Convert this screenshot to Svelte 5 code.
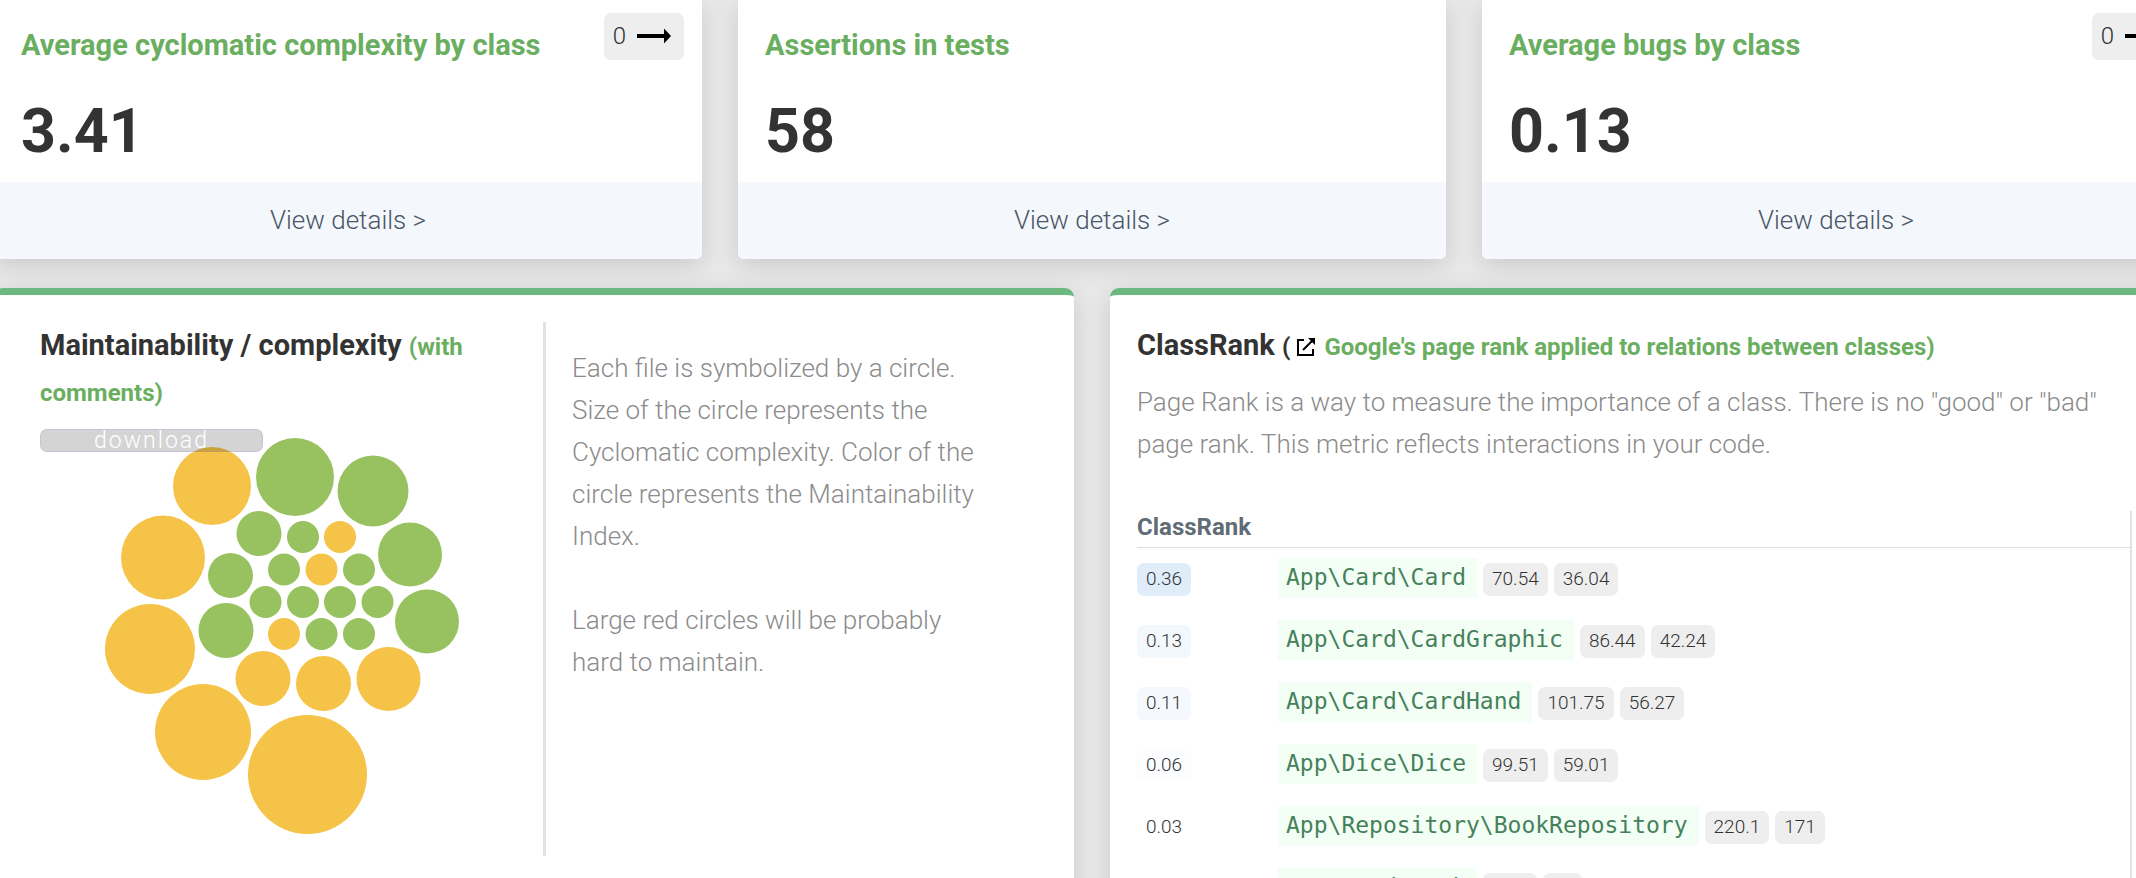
<script>
  const stats = [
    { title: 'Average cyclomatic complexity by class', value: '3.41', trend: '0' },
    { title: 'Assertions in tests', value: '58', trend: null },
    { title: 'Average bugs by class', value: '0.13', trend: '0' }
  ];

  const rows = [
    { rank: '0.36', tint: '#deedf9', name: 'App\\Card\\Card', a: '70.54', b: '36.04' },
    { rank: '0.13', tint: '#f3f8fd', name: 'App\\Card\\CardGraphic', a: '86.44', b: '42.24' },
    { rank: '0.11', tint: '#f5f9fd', name: 'App\\Card\\CardHand', a: '101.75', b: '56.27' },
    { rank: '0.06', tint: '#fcfdfe', name: 'App\\Dice\\Dice', a: '99.51', b: '59.01' },
    { rank: '0.03', tint: '#ffffff', name: 'App\\Repository\\BookRepository', a: '220.1', b: '171' },
    { rank: '0.03', tint: '#ffffff', name: 'App\\Card\\Deck', a: '83.2', b: '42' }
  ];

  const good = '#98c25f';
  const fair = '#f5c347';

  // One entry per file: centre, radius (complexity), fill (maintainability)
  const circles = [
    [212, 486, 39, fair], [295, 477, 39, good], [373, 491, 35.5, good],
    [163, 557.5, 42, fair], [259, 533.5, 22.5, good], [303, 537, 16, good],
    [340, 537, 16, fair], [410, 554.5, 32, good], [230.5, 575.5, 22.5, good],
    [284, 569.5, 16, good], [321.5, 569.5, 16, fair], [359, 569.5, 16, good],
    [265.5, 602, 16, good], [303, 602, 16, good], [340, 602, 16, good],
    [377.5, 602, 16, good], [284, 634, 16, fair], [321.5, 634, 16, good],
    [359, 634, 16, good], [427, 621.5, 32, good], [226, 630.5, 27.5, good],
    [150, 649, 45, fair], [263, 678.5, 27.5, fair], [323.5, 683.5, 27.5, fair],
    [388.5, 679, 32, fair], [203, 732, 48, fair], [307.5, 774.5, 59.5, fair]
  ];
</script>

<main class="page">
  <div class="board">
    <section class="stats">
      {#each stats as s}
        <article class="card stat">
          <div class="stat-body">
            <h2>{s.title}</h2>
            <p class="value">{s.value}</p>
            {#if s.trend !== null}
              <span class="trend">
                {s.trend}
                <svg width="34" height="16" viewBox="0 0 34 16" aria-hidden="true">
                  <path d="M0 6h27V0.5l7 7.5-7 7.500V10H0z" fill="#000" />
                </svg>
              </span>
            {/if}
          </div>
          <a class="details" href="#details">View details &gt;</a>
        </article>
      {/each}
    </section>

    <section class="panels">
      <article class="card panel maintain">
        <div class="chart-col">
          <h3>Maintainability / complexity <a href="#comments">(with comments)</a></h3>
          <div class="chart">
            <svg viewBox="40 429 480 427" role="img" aria-label="Maintainability by file">
              {#each circles as [cx, cy, r, fill]}
                <circle {cx} {cy} {r} {fill} />
              {/each}
            </svg>
            <button class="download" type="button">download</button>
          </div>
        </div>
        <div class="explain">
          <p>Each file is symbolized by a circle. Size of the circle represents the Cyclomatic complexity. Color of the circle represents the Maintainability Index.</p>
          <p>Large red circles will be probably hard to maintain.</p>
        </div>
      </article>

      <article class="card panel rank">
        <h3>
          ClassRank
          <small>(<svg class="ext" width="20" height="20" viewBox="0 0 20 20" aria-hidden="true">
              <path d="M8 3H2v15h15v-6" fill="none" stroke="#000" stroke-width="2" />
              <path d="M7 13L17 3" stroke="#000" stroke-width="2" />
              <path d="M12 1h7v7z" fill="#000" />
            </svg>
            <a href="#pagerank">Google's page rank applied to relations between classes)</a></small>
        </h3>
        <p class="intro">Page Rank is a way to measure the importance of a class. There is no "good" or "bad" page rank. This metric reflects interactions in your code.</p>
        <div class="scroll">
          <table>
            <thead>
              <tr><th scope="col">ClassRank</th><td></td></tr>
            </thead>
            <tbody>
              {#each rows as r}
                <tr>
                  <td><span class="chip" style="background: {r.tint}">{r.rank}</span></td>
                  <td>
                    <div class="item">
                      <code>{r.name}</code>
                      <span class="chip">{r.a}</span>
                      <span class="chip">{r.b}</span>
                    </div>
                  </td>
                </tr>
              {/each}
            </tbody>
          </table>
        </div>
      </article>
    </section>
  </div>
</main>

<style>
  :global(body) {
    margin: 0;
    background: #e8e8e8;
    overflow: hidden;
  }
  .page {
    height: 100vh;
    overflow: hidden;
    background: #e8e8e8;
    font-family: Roboto, 'Liberation Sans', sans-serif;
    font-weight: 300;
    color: #333;
  }
  .page :is(h2, h3, p) {
    margin: 0;
  }
  a {
    color: #6aae5f;
    text-decoration: none;
  }
  .board {
    display: flex;
    flex-direction: column;
    gap: 29px;
    margin: 0 -54px 0 -6px;
  }
  .stats,
  .panels {
    display: grid;
    gap: 36px;
  }
  .stats {
    grid-template-columns: repeat(3, minmax(0, 1fr));
  }
  .panels {
    grid-template-columns: repeat(2, minmax(0, 1fr));
  }
  .card {
    background: #fff;
    border-radius: 6px;
    box-shadow: 0 6px 24px rgba(0, 0, 0, 0.13);
  }
  .stat {
    border-radius: 0 0 6px 6px;
  }
  .stat-body {
    position: relative;
    padding: 24px 28px 8px 27px;
  }
  h2 {
    font-size: 29px;
    line-height: 42px;
    font-weight: 700;
    color: #6aae5f;
  }
  .stat-body .value {
    padding-top: 22px;
    font-size: 61px;
    line-height: 86px;
    font-weight: 700;
  }
  .trend {
    position: absolute;
    top: 13px;
    right: 18px;
    display: flex;
    align-items: center;
    gap: 11px;
    box-sizing: border-box;
    height: 47px;
    padding: 0 13px 2px 9px;
    border-radius: 7px;
    background: #eee;
    font-size: 24px;
  }
  .details {
    display: block;
    padding: 17px 0 18px;
    border-radius: 0 0 6px 6px;
    background: #f4f8fc;
    color: #4a5568;
    font-size: 26px;
    line-height: 42px;
    text-align: center;
  }
  .panel {
    box-sizing: border-box;
    border-top: 7px solid #6cb881;
    border-radius: 9px 9px 0 0;
    min-height: 640px;
  }
  .maintain {
    display: grid;
    grid-template-columns: 506px 1fr;
    align-items: start;
    padding: 27px 80px 22px 46px;
  }
  .chart-col {
    border-right: 3px solid #e2e2e2;
    padding-right: 23px;
  }
  h3 {
    font-size: 29px;
    line-height: 46px;
    font-weight: 700;
  }
  h3 a,
  h3 small {
    font-size: 24px;
    line-height: 24px;
  }
  .chart {
    position: relative;
    margin-top: 15px;
  }
  .chart svg {
    display: block;
    width: 100%;
  }
  .download {
    position: absolute;
    top: 0;
    left: 0;
    width: 223px;
    height: 23px;
    padding: 0;
    border: 1px solid rgba(155, 120, 220, 0.2);
    border-radius: 7px;
    background: rgba(0, 0, 0, 0.17);
    color: #fff;
    font: 300 23px/21px Roboto, sans-serif;
    letter-spacing: 2px;
  }
  .explain {
    padding: 25px 0 0 26px;
    font-size: 26px;
    line-height: 42px;
    color: #8b8b8b;
  }
  .explain p + p {
    margin-top: 42px;
  }
  .rank {
    padding: 27px 58px 0 27px;
  }
  .ext {
    margin: 0 2px 0 6px;
    vertical-align: -2px;
  }
  .intro {
    padding: 13px 0 46px;
    font-size: 26px;
    line-height: 42px;
    color: #8b8b8b;
  }
  .scroll {
    border-right: 2px solid #e2e2e2;
  }
  table {
    width: 100%;
    border-collapse: collapse;
  }
  th,
  td {
    padding: 0;
    text-align: left;
  }
  thead th,
  thead td {
    padding-bottom: 4px;
    border-bottom: 1px solid #ddd;
    color: #606c76;
    font-size: 24px;
    font-weight: 700;
    line-height: 32px;
  }
  th {
    width: 141px;
  }
  tbody td {
    height: 52px;
    padding-top: 10px;
    vertical-align: baseline;
  }
  .item {
    display: flex;
    align-items: baseline;
    gap: 6px;
  }
  .chip {
    display: inline-block;
    padding: 0 9px 2px;
    border-radius: 7px;
    background: #eee;
    font-size: 19px;
    line-height: 31px;
  }
  code {
    padding: 0 11px 2px 8px;
    background: #f3fff5;
    color: #46815b;
    font: 400 23px/38px 'DejaVu Sans Mono', monospace;
  }
</style>
